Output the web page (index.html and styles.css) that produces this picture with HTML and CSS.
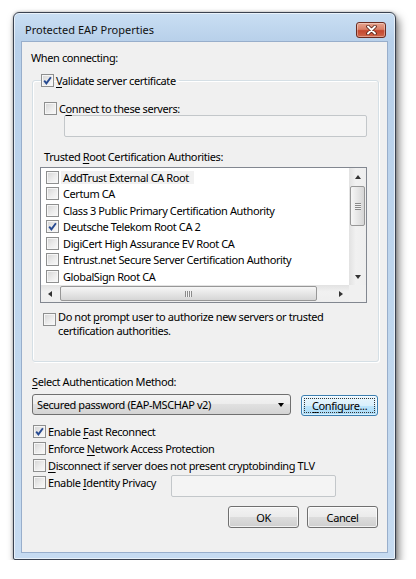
FILE: index.html
```html
<!DOCTYPE html>
<html lang="en">
<head>
  <meta charset="UTF-8">
  <meta name="viewport" content="width=device-width, initial-scale=1.0">
  <title>Protected EAP Properties</title>
  <link rel="stylesheet" href="styles.css">
</head>
<body>
  <!-- shared tick mark for the checked boxes -->
  <svg class="defs" width="0" height="0">
    <symbol id="tick" viewBox="0 0 11 11">
      <path d="M2.2 5.6 L4.4 8.4 L8.9 2.2" fill="none" stroke="#274a91" stroke-width="1.9"/>
    </symbol>
  </svg>

  <div class="window">
    <div class="titlebar">
      <span class="title">Protected EAP Properties</span>
      <button class="close" aria-label="Close">
        <svg width="13" height="10" viewBox="0 0 13 10">
          <path d="M3 1.5 L10 8.5 M10 1.5 L3 8.5" stroke="#5a2318" stroke-width="3.6" stroke-linecap="round"/>
          <path d="M3 1.5 L10 8.5 M10 1.5 L3 8.5" stroke="#fff" stroke-width="1.9" stroke-linecap="round"/>
        </svg>
      </button>
    </div>

    <div class="client">
      <div class="caption">When connecting:</div>

      <fieldset class="group">
        <legend>
          <label class="check"><span class="box"><svg><use href="#tick"/></svg></span><span><u>V</u>alidate server certificate</span></label>
        </legend>

        <label class="check servers-check"><span class="box"></span><span>C<u>o</u>nnect to these servers:</span></label>
        <div class="textbox servers"></div>

        <div class="list-caption">Trusted <u>R</u>oot Certification Authorities:</div>
        <div class="listbox">
          <ul class="items">
            <li class="hot"><span class="box"></span><span class="text">AddTrust External CA Root</span></li>
            <li><span class="box"></span><span class="text">Certum CA</span></li>
            <li><span class="box"></span><span class="text">Class 3 Public Primary Certification Authority</span></li>
            <li><span class="box"><svg><use href="#tick"/></svg></span><span class="text">Deutsche Telekom Root CA 2</span></li>
            <li><span class="box"></span><span class="text">DigiCert High Assurance EV Root CA</span></li>
            <li><span class="box"></span><span class="text">Entrust.net Secure Server Certification Authority</span></li>
            <li><span class="box"></span><span class="text">GlobalSign Root CA</span></li>
          </ul>
          <div class="vscroll">
            <span class="arrow"><i class="tri up"></i></span>
            <span class="vthumb"><i class="grip"></i></span>
            <span class="arrow down-arrow"><i class="tri down"></i></span>
          </div>
          <div class="hscroll">
            <span class="arrow"><i class="tri left"></i></span>
            <span class="hthumb"><i class="grip"></i></span>
            <span class="arrow right-arrow"><i class="tri right"></i></span>
          </div>
          <div class="corner"></div>
        </div>

        <label class="prompt"><span class="box"></span><span class="prompt-text">Do not <u>p</u>rompt user to authorize new servers or trusted<br>certification authorities.</span></label>
      </fieldset>

      <div class="method-caption"><u>S</u>elect Authentication Method:</div>
      <div class="method-row">
        <div class="combo"><span>Secured password (EAP-MSCHAP v2)</span><i class="tri down"></i></div>
        <button class="btn configure"><span class="focus"><u>C</u>onfigure...</span></button>
      </div>

      <div class="options">
        <label class="opt"><span class="box"><svg><use href="#tick"/></svg></span><span>Enable <u>F</u>ast Reconnect</span></label>
        <label class="opt"><span class="box"></span><span>Enforce <u>N</u>etwork Access Protection</span></label>
        <label class="opt"><span class="box"></span><span><u>D</u>isconnect if server does not present cryptobinding TLV</span></label>
        <div class="identity-row">
          <label class="opt identity"><span class="box"></span><span>Enable <u>I</u>dentity Privacy</span></label>
          <div class="textbox identity-box"></div>
        </div>
      </div>

      <div class="actions">
        <button class="btn">OK</button>
        <button class="btn">Cancel</button>
      </div>
    </div>
  </div>
</body>
</html>
```

FILE: styles.css
```css
body {
	margin: 0;
	background: #fff;
	font-family: "Noto Sans", "Open Sans", sans-serif;
	font-size: 11px;
	color: #000;
}

.defs {
	position: absolute;
}

u {
	text-decoration-thickness: 1px;
	text-underline-offset: 2px;
}

/* window frame */
.window {
	box-sizing: border-box;
	width: 383px;
	height: 548px;
	margin: 12px 0 0 13px;
	padding: 0 7px 6px;
	border: 1px solid #3a4250;
	border-radius: 6px 6px 2px 2px;
	background: linear-gradient(#c9def3, #b8d0ea 28px, #c0d7ee 60%, #c6dbf1);
	box-shadow: 3px 5px 9px rgba(0, 0, 0, 0.5), 0 0 3px rgba(0, 0, 0, 0.3),
		inset 0 0 0 1px rgba(255, 255, 255, 0.6);
	display: flex;
	flex-direction: column;
}

.titlebar {
	box-sizing: border-box;
	height: 28px;
	padding: 9px 2px 3px 4px;
	display: flex;
	align-items: center;
	justify-content: space-between;
}

.title {
	line-height: 16px;
	color: #111;
}

.close {
	width: 30px;
	height: 16px;
	padding: 0;
	border: 1px solid #6a2b20;
	border-radius: 3px;
	background: linear-gradient(#e6a48f, #d98068 45%, #c4472e 55%, #cf674b);
	box-shadow: inset 0 0 0 1px rgba(255, 255, 255, 0.35);
	display: flex;
	align-items: center;
	justify-content: center;
}

.client {
	flex: 1;
	box-sizing: border-box;
	border: 1px solid #98aecb;
	background: #f0f0f0;
	padding: 0 9px 0 10px;
	letter-spacing: -0.4px;
}

.caption {
	line-height: 16px;
	margin: 8px 0 0 -1px;
}

/* group box */
.group {
	box-sizing: border-box;
	width: 347px;
	height: 288px;
	margin: 8px 0 0;
	padding: 0;
	border: 1px solid #d5dfe5;
	border-radius: 3px;
	box-shadow: inset 1px 1px 0 #fff, 1px 1px 0 #fff;

	legend {
		margin-left: 8px;
		padding: 0 3px 0 0;
		height: 13px;
	}
}

.check {
	display: flex;
	align-items: center;
	gap: 2px;
	height: 13px;
	line-height: 13px;
	white-space: nowrap;
}

.box {
	box-sizing: border-box;
	flex: none;
	width: 13px;
	height: 13px;
	border: 1px solid #8e8f8f;
	background: linear-gradient(135deg, #d4d4d4, #ececec 55%, #fafafa);
	box-shadow: inset 0 0 0 1px #f6f6f6;
	display: flex;
	align-items: center;
	justify-content: center;

	svg {
		width: 11px;
		height: 11px;
	}
}

.servers-check {
	margin: 15px 0 0 11px;
}

.textbox {
	box-sizing: border-box;
	height: 22px;
	border: 1px solid #c3c7ca;
	border-radius: 2px;
	background: #f4f4f4;
}

.servers {
	width: 303px;
	margin-left: 31px;
}

.list-caption {
	line-height: 14px;
	margin: 13px 0 0 11px;
}

/* certificate list */
.listbox {
	box-sizing: border-box;
	width: 327px;
	height: 136px;
	margin: 3px 0 0 7px;
	border: 1px solid #828790;
	background: #fff;
	display: grid;
	grid-template-columns: 1fr 17px;
	grid-template-rows: 1fr 17px;
}

.items {
	list-style: none;
	margin: 0;
	padding: 1px 0 0 5px;
	overflow: hidden;

	li {
		height: 16.5px;
		display: flex;
		align-items: center;
		gap: 4px;
		white-space: nowrap;
	}

	.text {
		line-height: 13px;
	}

	.hot .text {
		margin-left: -2px;
		padding: 0 5px 0 2px;
		background: #f1f1f1;
	}
}

.vscroll {
	background: linear-gradient(90deg, #e2e2e2, #f1f1f1 40%, #eeeeee);
	display: flex;
	flex-direction: column;
	align-items: center;
}

.hscroll {
	background: linear-gradient(#e2e2e2, #f1f1f1 40%, #eeeeee);
	display: flex;
	align-items: center;
}

.corner {
	background: #f0f0f0;
}

.arrow {
	flex: none;
	width: 17px;
	height: 17px;
	display: flex;
	align-items: center;
	justify-content: center;
}

.down-arrow {
	margin-top: auto;
}

.right-arrow {
	margin-left: auto;
}

.tri {
	width: 0;
	height: 0;
	border-style: solid;
	border-color: transparent;
}

.tri.up {
	border-width: 0 3.5px 4px;
	border-bottom-color: #333;
}

.tri.down {
	border-width: 4px 3.5px 0;
	border-top-color: #333;
}

.tri.left {
	border-width: 3.5px 4px 3.5px 0;
	border-right-color: #333;
}

.tri.right {
	border-width: 3.5px 0 3.5px 4px;
	border-left-color: #333;
}

.vthumb,
.hthumb {
	box-sizing: border-box;
	border: 1px solid #979797;
	border-radius: 2px;
	display: flex;
	align-items: center;
	justify-content: center;
}

.vthumb {
	width: 15px;
	height: 40px;
	margin-top: 1px;
	background: linear-gradient(90deg, #f6f6f6, #e6e6e6 50%, #d6d6d6);

	.grip {
		width: 6px;
		height: 7px;
		background: repeating-linear-gradient(#8a8a8a 0 1px, #f2f2f2 1px 2px);
	}
}

.hthumb {
	width: 257px;
	height: 15px;
	margin-left: 2px;
	background: linear-gradient(#f6f6f6, #e6e6e6 50%, #d6d6d6);

	.grip {
		width: 7px;
		height: 6px;
		background: repeating-linear-gradient(90deg, #8a8a8a 0 1px, #f2f2f2 1px 2px);
	}
}

.prompt {
	display: flex;
	align-items: flex-start;
	gap: 2px;
	margin: 10px 0 0 10px;
}

.prompt-text {
	margin-top: -3px;
	line-height: 14px;
	white-space: nowrap;
}

/* authentication method */
.method-caption {
	line-height: 17px;
	margin-top: 11px;
}

.method-row {
	display: flex;
	margin-top: 4px;
}

.combo {
	box-sizing: border-box;
	width: 260px;
	height: 21px;
	padding: 0 6px 0 4px;
	border: 1px solid #707070;
	border-radius: 3px;
	background: linear-gradient(#f4f4f4, #ececec 50%, #e0e0e0 50%, #d4d4d4);
	display: flex;
	align-items: center;
	justify-content: space-between;

	.tri.down {
		border-width: 4px 3.5px 0;
		border-top-color: #000;
	}
}

.btn {
	box-sizing: border-box;
	width: 71px;
	height: 22px;
	padding: 0;
	border: 1px solid #707070;
	border-radius: 3px;
	background: linear-gradient(#f3f3f3, #ebebeb 50%, #dddddd 50%, #cfcfcf);
	box-shadow: inset 0 0 0 1px rgba(255, 255, 255, 0.7);
	font: inherit;
	letter-spacing: inherit;
	color: #000;
}

.configure {
	width: 77px;
	height: 21px;
	margin: 1px 0 0 10px;
	padding: 2px;
	border-color: #3c7fb1;
	background: linear-gradient(#eaf6fd, #d9f0fc 50%, #bee6fd 50%, #a7d9f5);
	box-shadow: inset 0 0 0 1px rgba(255, 255, 255, 0.6);

	.focus {
		display: flex;
		align-items: center;
		justify-content: center;
		height: 100%;
		outline: 1px dotted #333;
		outline-offset: -1px;
	}
}

.options {
	margin-top: 7px;
}

.opt {
	display: flex;
	align-items: center;
	gap: 2px;
	height: 17px;
	margin-left: 1px;
	white-space: nowrap;
}

.identity-row {
	display: flex;
	align-items: flex-start;
}

.identity {
	width: 138px;
}

.identity-box {
	width: 165px;
	margin-top: 1px;
}

.actions {
	display: flex;
	justify-content: flex-end;
	gap: 8px;
	margin-top: 9px;
}
```
